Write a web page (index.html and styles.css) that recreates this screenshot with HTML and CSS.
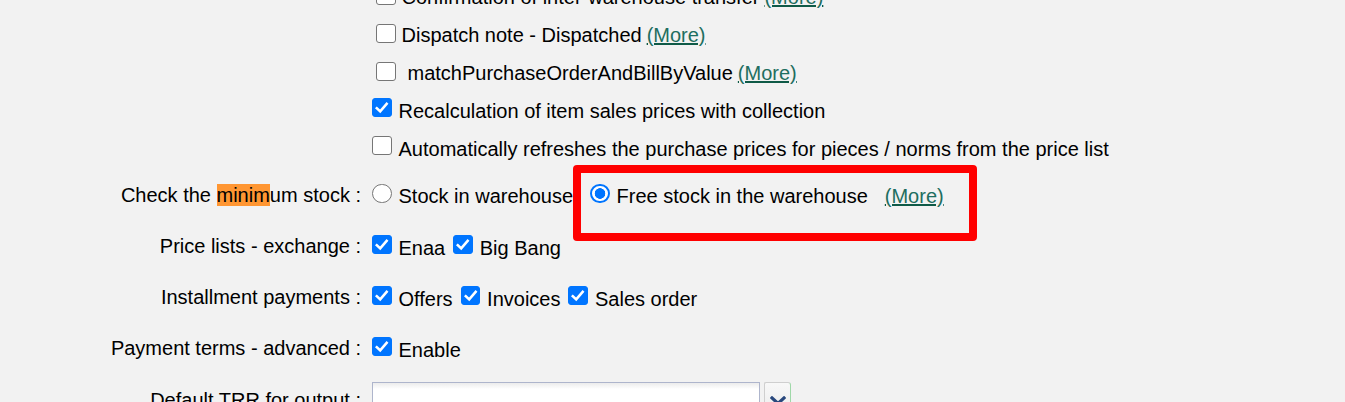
FILE: index.html
```html
<!DOCTYPE html>
<html lang="en">
<head>
<meta charset="utf-8">
<title>Settings</title>
<link rel="stylesheet" href="styles.css">
</head>
<body>
<div class="page">
  <div class="row row-list">
    <div class="label"></div>
    <div class="value list">
      <div class="line inset"><input type="checkbox"><span class="txt">Confirmation of inter-warehouse transfer</span><a href="#" class="more">(More)</a></div>
      <div class="line inset"><input type="checkbox"><span class="txt">Dispatch note - Dispatched</span><a href="#" class="more">(More)</a></div>
      <div class="line inset"><input type="checkbox"><span class="txt lead">matchPurchaseOrderAndBillByValue</span><a href="#" class="more">(More)</a></div>
      <div class="line"><input type="checkbox" class="raised" checked><span class="txt">Recalculation of item sales prices with collection</span></div>
      <div class="line"><input type="checkbox" class="raised"><span class="txt">Automatically refreshes the purchase prices for pieces / norms from the price list</span></div>
    </div>
  </div>

  <div class="row">
    <div class="label">Check the <mark class="find">minim</mark>um stock :</div>
    <div class="value has-box">
      <input type="radio" name="minstock" class="rad"><span class="txt">Stock in warehouse</span><input type="radio" name="minstock" class="rad rad2" checked><span class="txt">Free stock in the warehouse</span><a href="#" class="more more-far">(More)</a>
      <div class="annot"></div>
    </div>
  </div>

  <div class="row">
    <div class="label">Price lists - exchange :</div>
    <div class="value shifted">
      <input type="checkbox" checked><span class="txt">Enaa</span><input type="checkbox" class="next" checked><span class="txt">Big Bang</span>
    </div>
  </div>

  <div class="row">
    <div class="label">Installment payments :</div>
    <div class="value shifted">
      <input type="checkbox" checked><span class="txt">Offers</span><input type="checkbox" class="next" checked><span class="txt">Invoices</span><input type="checkbox" class="next" checked><span class="txt">Sales order</span>
    </div>
  </div>

  <div class="row">
    <div class="label">Payment terms - advanced :</div>
    <div class="value shifted">
      <input type="checkbox" checked><span class="txt">Enable</span>
    </div>
  </div>

  <div class="row row-last">
    <div class="label label-top">Default TRR for output :</div>
    <div class="value combo">
      <div class="combo-input"></div>
      <div class="combo-btn">
        <svg width="16" height="10" viewBox="0 0 16 10"><path d="M2 2 L8 7.5 L14 2" fill="none" stroke="#29487d" stroke-width="3.2" stroke-linecap="square"/></svg>
      </div>
    </div>
  </div>
</div>
</body>
</html>
```

FILE: styles.css
```css
html, body {
  margin: 0;
  padding: 0;
  background: #f2f2f2;
}

body {
  font-family: "Liberation Sans", Arial, sans-serif;
  font-size: 20px;
  color: #000;
  overflow: hidden;
}

.page {
  margin-top: -22px;
}

.row {
  display: grid;
  grid-template-columns: 361px 1fr;
  column-gap: 11px;
  height: 51px;
}

.row-list {
  height: auto;
  padding-bottom: 3px;
}

.label {
  text-align: right;
  line-height: 48px;
  white-space: nowrap;
}

.value {
  line-height: 51px;
  white-space: nowrap;
  position: relative;
}

.value.shifted {
  line-height: 52px;
}

.list .line {
  height: 38px;
  line-height: 38px;
}

.line.inset {
  padding-left: 4px;
}

input[type="checkbox"],
input[type="radio"] {
  -webkit-appearance: none;
  appearance: none;
  box-sizing: border-box;
  display: inline-block;
  width: 19.5px;
  height: 19.5px;
  margin: 0;
  vertical-align: baseline;
  background-color: #ffffff;
  border: 1.5px solid #767676;
}

input[type="checkbox"] {
  border-radius: 3px;
  margin-bottom: 1px;
}

input[type="checkbox"]:checked {
  background-color: #0075ff;
  border-color: #0075ff;
  background-image: url("data:image/svg+xml,%3Csvg xmlns='http://www.w3.org/2000/svg' viewBox='0 0 20 20'%3E%3Cpath d='M4.2 10.2 L8 13.8 L15.2 5.4' fill='none' stroke='white' stroke-width='2.8' stroke-linecap='square'/%3E%3C/svg%3E");
  background-size: 100% 100%;
  background-repeat: no-repeat;
}

input[type="radio"] {
  border-radius: 50%;
}

input[type="radio"]:checked {
  border: 2px solid #0075ff;
  background: radial-gradient(circle, #0075ff 0 5px, #ffffff 5.6px);
}

.line input[type="checkbox"] {
  margin-bottom: -1px;
}

.line input.raised {
  margin-bottom: 1px;
}

.txt {
  margin-left: 7px;
}

.line.inset .txt {
  margin-left: 6px;
}

.line.inset .txt.lead {
  margin-left: 12px;
}

.line .more {
  margin-left: 5px;
}

input.next {
  margin-left: 8px;
}

input.rad2 {
  margin-left: 17px;
}

.more {
  color: #1e6e60;
  text-decoration: underline;
  text-decoration-color: #0f5a47;
}

.value .more-far {
  margin-left: 17px;
}

mark.find {
  background: #ff9632;
  color: #000;
}

.annot {
  position: absolute;
  left: 201px;
  top: -6px;
  width: 388px;
  height: 60px;
  border: 8px solid #ff0000;
  border-radius: 4px;
}

.label-top {
  line-height: 50px;
}

.combo {
  display: flex;
  align-items: flex-start;
  padding-top: 7px;
  gap: 4px;
}

.combo-input {
  width: 386px;
  height: 40px;
  border: 1px solid #aeb5cc;
  background: linear-gradient(#ececec, #ffffff 6px, #ffffff);
}

.combo-btn {
  width: 27px;
  height: 40px;
  border: 1px solid #cfcfcf;
  border-right: 1px solid #9fd8a8;
  border-radius: 2px 3px 0 0;
  background: linear-gradient(#f8f8f8, #e9e9e9);
  display: flex;
  justify-content: center;
  padding-top: 13px;
  box-sizing: border-box;
}
```
